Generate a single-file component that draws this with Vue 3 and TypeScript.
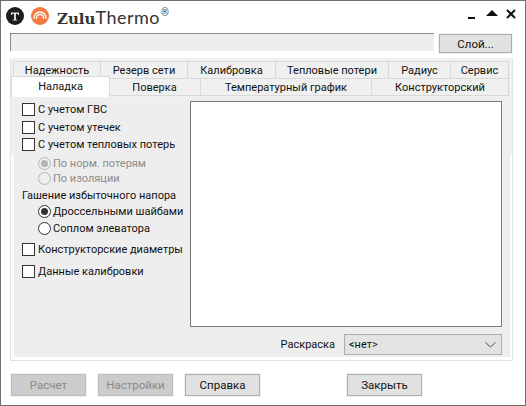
<script setup lang="ts">
interface Tab {
  label: string
  width: number
}

const topTabs: Tab[] = [
  { label: 'Надежность', width: 88 },
  { label: 'Резерв сети', width: 87 },
  { label: 'Калибровка', width: 88 },
  { label: 'Тепловые потери', width: 113 },
  { label: 'Радиус', width: 62 },
  { label: 'Сервис', width: 58 }
]

const bottomTabs: Tab[] = [
  { label: 'Поверка', width: 92 },
  { label: 'Температурный график', width: 171 },
  { label: 'Конструкторский', width: 137 }
]
</script>

<template>
  <div class="window">
    <header class="titlebar">
      <div class="brand">
        <svg width="44" height="20" viewBox="0 0 44 20">
          <circle cx="9" cy="10" r="9" fill="#1d1d1b" />
          <path d="M5 6.500h8v2.600h-.9l-.4-1.300H9.900v5.600l1.100.4v.7H7v-.7l1.100-.4V7.800H6.300l-.4 1.300H5z" fill="#eeeeee" />
          <circle cx="34" cy="10" r="9" fill="#f37b43" />
          <path d="M28 13v-1a6 6 0 0 1 12 0v1" fill="none" stroke="#fff" stroke-width="1.300" />
          <path d="M30.500 13v-1a3.500 3.500 0 0 1 7 0v1" fill="none" stroke="#fff" stroke-width="1.300" />
        </svg>
        <span class="zulu">Zulu</span><span class="thermo">Thermo</span><sup class="reg">®</sup>
      </div>
      <div class="controls">
        <span class="ctl-min"></span>
        <span class="ctl-up"></span>
        <svg class="ctl-close" width="10" height="10" viewBox="0 0 10 10">
          <path d="M1 1l8 8M9 1l-8 8" stroke="#111" stroke-width="2" />
        </svg>
      </div>
    </header>

    <div class="layer-row">
      <div class="layer-input"></div>
      <button class="btn btn-layer">Слой...</button>
    </div>

    <section class="tabs">
      <div class="tab-row tab-row-top">
        <div v-for="t in topTabs" :key="t.label" class="tab" :style="{ width: t.width + 'px' }">{{ t.label }}</div>
      </div>
      <div class="tab-row tab-row-bottom">
        <div class="tab tab-active">Наладка</div>
        <div v-for="t in bottomTabs" :key="t.label" class="tab" :style="{ width: t.width + 'px' }">{{ t.label }}</div>
      </div>
      <div class="pane">
        <div class="options">
          <label class="check"><i class="box"></i>С учетом ГВС</label>
          <label class="check"><i class="box"></i>С учетом утечек</label>
          <label class="check"><i class="box"></i>С учетом тепловых потерь</label>
          <label class="radio radio-off first-radio"><i class="dot dot-on"></i>По норм. потерям</label>
          <label class="radio radio-off"><i class="dot"></i>По изоляции</label>
          <div class="caption">Гашение избыточного напора</div>
          <label class="radio"><i class="dot dot-on"></i>Дроссельными шайбами</label>
          <label class="radio nozzle"><i class="dot"></i>Соплом элеватора</label>
          <label class="check check-gap"><i class="box"></i>Конструкторские диаметры</label>
          <label class="check check-gap2"><i class="box"></i>Данные калибровки</label>
        </div>
        <div class="result">
          <div class="result-list"></div>
          <div class="coloring">
            <span>Раскраска</span>
            <div class="select">
              <span>&lt;нет&gt;</span>
              <svg width="11" height="6" viewBox="0 0 11 6">
                <path d="M.5.500l5 4.500 5-4.500" fill="none" stroke="#555" />
              </svg>
            </div>
          </div>
        </div>
      </div>
    </section>

    <footer class="actions">
      <button class="btn btn-off">Расчет</button>
      <button class="btn btn-off">Настройки</button>
      <button class="btn">Справка</button>
      <button class="btn btn-close">Закрыть</button>
    </footer>
  </div>
</template>

<style>
html,
body {
  margin: 0;
  background: #fff;
}
</style>

<style scoped>
.window {
  width: 526px;
  height: 406px;
  box-sizing: border-box;
  border: 1px solid #6f6f6f;
  background: #fff;
  color: #111;
  font-family: Roboto, "Open Sans", sans-serif;
  font-size: 11px;
  overflow: hidden;
}

.titlebar {
  height: 32px;
  display: flex;
  justify-content: space-between;
  align-items: flex-start;
}

.brand {
  display: flex;
  align-items: baseline;
  padding: 5px 0 0 5px;
  height: 24px;
}

.brand svg {
  align-self: flex-start;
  margin-right: 7px;
  flex: none;
}

.zulu {
  font-family: "DejaVu Serif", serif;
  font-size: 15px;
  font-weight: 700;
  color: #333;
  line-height: 22px;
}

.thermo {
  font-family: Lato, sans-serif;
  font-size: 18px;
  letter-spacing: 0.500px;
  color: #333;
  line-height: 22px;
}

.reg {
  font-size: 10px;
  color: #444;
  line-height: 10px;
  margin-left: 1px;
  align-self: flex-start;
  margin-top: 2px;
}

.controls {
  display: flex;
  align-items: flex-start;
  padding: 8px 9px 0 0;
}

.ctl-min {
  width: 7px;
  height: 2px;
  background: #111;
  margin: 8px 11px 0 0;
}

.ctl-up {
  width: 0;
  height: 0;
  border-left: 6px solid transparent;
  border-right: 6px solid transparent;
  border-bottom: 6px solid #111;
  margin: 1px 8px 0 0;
}

.layer-row {
  display: flex;
  height: 19px;
  padding-left: 9px;
}

.layer-input {
  width: 424px;
  height: 18px;
  box-sizing: border-box;
  background: #eeeeee;
  border-top: 1px solid #8a8a8a;
  border-left: 1px solid #8a8a8a;
}

.btn {
  box-sizing: border-box;
  width: 75px;
  height: 22px;
  padding: 0;
  border: 1px solid #adadad;
  outline: 1px solid #f2f2f2;
  background: #e1e1e1;
  color: #111;
  font: inherit;
  font-size: 11.500px;
}

.btn-layer {
  width: 73px;
  height: 19px;
  margin: 1px 0 0 5px;
  line-height: 16px;
}

.tabs {
  width: 503px;
  height: 303px;
  box-sizing: border-box;
  margin: 6px 0 0 9px;
  padding: 3px 3px 0 2px;
  background: linear-gradient(#f0f0f0 97px, #fff 97px);
  border-right: 1px solid #e3e3e3;
  border-bottom: 1px solid #e3e3e3;
  border-left: 1px solid #e3e3e3;
}

.tab-row {
  display: flex;
  height: 17px;
}

.tab-row-bottom {
  height: 18px;
  margin-left: -2px;
  padding-left: 98px;
  position: relative;
}

.tab {
  box-sizing: border-box;
  height: 100%;
  display: flex;
  align-items: center;
  justify-content: center;
  background: #f0f0f0;
  border-right: 1px solid #d9d9d9;
  border-top: 1px solid #d9d9d9;
  white-space: nowrap;
}

.tab-row-top .tab:first-child {
  border-left: 1px solid #d9d9d9;
}

.tab-row-bottom .tab {
  border-bottom: 1px solid #d9d9d9;
}

/* selected tab stands up over the row above */
.tab-active {
  position: absolute;
  left: 0;
  bottom: -1px;
  width: 99px;
  height: 21px;
  background: #fff;
  border: 1px solid #d9d9d9 !important;
  border-bottom: none !important;
  padding-bottom: 2px;
}

.pane {
  height: 260px;
  margin: 1px 0 0 1px;
  background: #eeeeee;
  display: flex;
  padding: 4px 8px 0 8px;
  box-sizing: border-box;
  width: 496px;
}

.options {
  width: 168px;
  flex: none;
  display: flex;
  flex-direction: column;
  white-space: nowrap;
}

.check,
.radio,
.caption {
  display: flex;
  align-items: center;
  height: 17.500px;
}

.box {
  width: 13px;
  height: 13px;
  box-sizing: border-box;
  border: 1px solid #333;
  background: #fff;
  margin-right: 3px;
  flex: none;
}

.radio {
  padding-left: 16px;
  height: 15.500px;
}

.first-radio {
  margin-top: 2px;
}

.nozzle {
  margin-top: 1px;
}

.dot {
  width: 13px;
  height: 13px;
  box-sizing: border-box;
  border: 1px solid #333;
  border-radius: 50%;
  background: #fff;
  margin-right: 2px;
  flex: none;
  display: flex;
  align-items: center;
  justify-content: center;
}

.dot-on::after {
  content: "";
  width: 7px;
  height: 7px;
  border-radius: 50%;
  background: #333;
}

.radio-off {
  color: #8c8c8c;
}

.radio-off .dot {
  border-color: #b5b5b5;
  background: #eee;
}

.radio-off .dot-on::after {
  background: #b5b5b5;
}

.check-gap {
  margin-top: 5px;
}

.check-gap2 {
  margin-top: 4.500px;
}

.result {
  flex: 1;
  display: flex;
  flex-direction: column;
}

.result-list {
  height: 226px;
  box-sizing: border-box;
  background: #fff;
  border: 1px solid #7a7a7a;
}

.coloring {
  display: flex;
  align-items: center;
  justify-content: flex-end;
  gap: 9px;
  margin-top: 7px;
}

.select {
  width: 158px;
  height: 21px;
  box-sizing: border-box;
  display: flex;
  align-items: center;
  justify-content: space-between;
  padding: 0 5px 0 4px;
  background: #e3e3e3;
  border: 1px solid #adadad;
}

.actions {
  display: flex;
  padding: 13px 0 0 10px;
  gap: 12px;
}

.btn-off {
  background: #cccccc;
  border-color: #bdbdbd;
  color: #8a8a8a;
}

.btn-close {
  margin-left: 75px;
}
</style>
